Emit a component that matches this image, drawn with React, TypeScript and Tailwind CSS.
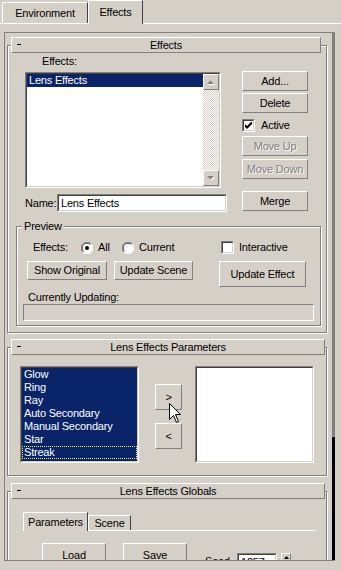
import React from 'react';

const FONT = "font-['Liberation_Sans',Arial,sans-serif] text-[11px] tracking-[-0.2px] leading-[13px]";
const RAISED = 'border border-t-white border-l-white border-r-[#808080] border-b-[#808080]';
const ETCHED = 'border border-[#808080] shadow-[inset_1px_1px_0_#fff,1px_1px_0_#fff]';
const DISABLED = 'text-[#808080] [text-shadow:1px_1px_0_#fff]';

function Btn({ children, className = '', disabled = false }: { children?: React.ReactNode; className?: string; disabled?: boolean }) {
  return (
    <div className={`${RAISED} flex items-center justify-center ${disabled ? DISABLED : ''} ${className}`}>
      {children}
    </div>
  );
}

function Sunken({ children, className = '', inner = '' }: { children?: React.ReactNode; className?: string; inner?: string }) {
  return (
    <div className={`border border-t-[#808080] border-l-[#808080] border-b-white border-r-white ${className}`}>
      <div className={`h-full border border-t-[#404040] border-l-[#404040] border-b-[#d4d0c8] border-r-[#d4d0c8] ${inner}`}>
        {children}
      </div>
    </div>
  );
}

function CheckBox({ checked = false }: { checked?: boolean }) {
  return (
    <Sunken className="w-[13px] h-[13px] shrink-0" inner="bg-white flex items-center justify-center">
      {checked && (
        <svg width="7" height="7" viewBox="0 0 7 7">
          <path d="M0 2v3l2 2 5-5V-1L2 4z" fill="#000" />
        </svg>
      )}
    </Sunken>
  );
}

function Radio({ checked = false }: { checked?: boolean }) {
  return (
    <svg width="12" height="12" viewBox="0 0 12 12" className="shrink-0">
      <circle cx="6" cy="6" r="5.5" fill="#fff" />
      <path d="M10.2 1.8A5.5 5.5 0 0 0 1.8 10.2" fill="none" stroke="#808080" />
      <path d="M9.4 2.6A4.5 4.5 0 0 0 2.6 9.4" fill="none" stroke="#404040" />
      <path d="M1.8 10.2A5.5 5.5 0 0 0 10.2 1.8" fill="none" stroke="#fff" />
      {checked && <circle cx="6" cy="6" r="2" fill="#000" />}
    </svg>
  );
}

function Arrow({ up }: { up?: boolean }) {
  return (
    <svg width="8" height="5" viewBox="0 0 8 5">
      <path d={up ? 'M1 5h7L4.5 1.5z' : 'M1 1h7L4.5 4.5z'} fill="#fff" />
      <path d={up ? 'M0 4h7L3.5 0.5z' : 'M0 0h7L3.5 3.5z'} fill="#808080" />
    </svg>
  );
}

function Rollout({ title, headerW, frameH, className = '', children }: { title: string; headerW: string; frameH: string; className?: string; children?: React.ReactNode }) {
  return (
    <div className={`ml-[2px] w-[320px] shrink-0 ${className}`}>
      <div className={`relative z-10 ml-[4px] h-[16px] ${headerW} ${RAISED} bg-[#d4d0c8] flex items-center`}>
        <div className="absolute left-[5px] top-[6px] w-[4px] h-px bg-black" />
        <div className="flex-1 text-center">{title}</div>
      </div>
      <div className={`-mt-[8px] ${ETCHED} ${frameH}`}>{children}</div>
    </div>
  );
}

const lensItems = ['Glow', 'Ring', 'Ray', 'Auto Secondary', 'Manual Secondary', 'Star', 'Streak'];

export default function App() {
  return (
    <div className={`w-[341px] h-[570px] bg-[#d4d0c8] overflow-hidden text-black ${FONT}`}>
      {/* top tabs */}
      <div className="flex items-end h-[24px] border-b border-white pl-[2px]">
        <div className="h-[21px] w-[86px] border-t border-l border-r border-t-white border-l-white border-r-[#404040] rounded-tl-[2px] flex items-center justify-center">
          Environment
        </div>
        <div className="relative z-10 -mb-px h-[24px] w-[55px] border-t border-l border-r border-t-white border-l-white border-r-[#404040] rounded-tl-[2px] bg-[#d4d0c8] flex items-center justify-center">
          Effects
        </div>
      </div>

      {/* rollout panel */}
      <div className="mt-[8px] ml-[4px] w-[331px] h-[529px] border-t border-l border-b border-[#808080] flex">
        <div className="w-[327px] h-full overflow-hidden pt-[4px] flex flex-col">
          {/* Effects */}
          <Rollout title="Effects" headerW="w-[310px]" frameH="h-[288px]">
            <div className="flex pt-[9px]">
              <div className="ml-[17px] w-[196px] flex flex-col">
                <div className="ml-[17px] h-[13px]">Effects:</div>
                <Sunken className="mt-[4px] w-[196px] h-[116px]" inner="bg-white flex">
                  <div className="flex-1">
                    <div className="h-[13px] bg-[#0a246a] text-white pl-[2px]">Lens Effects</div>
                  </div>
                  <div className="w-[16px] flex flex-col">
                    <Btn className="h-[16px] bg-[#d4d0c8]"><Arrow up /></Btn>
                    <div className="flex-1 [background-image:repeating-conic-gradient(#d4d0c8_0%_25%,#ffffff_0%_50%)] [background-size:2px_2px]" />
                    <Btn className="h-[16px] bg-[#d4d0c8]"><Arrow /></Btn>
                  </div>
                </Sunken>
                <div className="mt-[6px] flex items-center h-[18px]">
                  <div className="w-[32px] shrink-0">Name:</div>
                  <Sunken className="w-[170px] h-[18px] shrink-0" inner="bg-white flex items-center pl-[2px]">
                    Lens Effects
                  </Sunken>
                </div>
              </div>
              <div className="ml-[21px] mt-[16px] w-[66px] flex flex-col">
                <Btn className="h-[20px]">Add...</Btn>
                <Btn className="mt-[2px] h-[20px]">Delete</Btn>
                <div className="mt-[4px] h-[17px] flex items-center">
                  <CheckBox checked />
                  <div className="ml-[6px]">Active</div>
                </div>
                <Btn className="mt-[2px] h-[20px]" disabled>Move Up</Btn>
                <Btn className="mt-[3px] h-[20px]" disabled>Move Down</Btn>
                <Btn className="mt-[12px] h-[20px]">Merge</Btn>
              </div>
            </div>

            {/* Preview group */}
            <div className={`relative mt-[14px] ml-[8px] w-[305px] h-[100px] ${ETCHED}`}>
              <div className="absolute -top-[7px] left-[5px] bg-[#d4d0c8] px-[2px]">Preview</div>
              <div className="pt-[13px] flex items-center h-[28px]">
                <div className="ml-[16px] w-[48px]">Effects:</div>
                <Radio checked />
                <div className="ml-[5px] w-[24px]">All</div>
                <Radio />
                <div className="ml-[5px] w-[82px]">Current</div>
                <CheckBox />
                <div className="ml-[5px]">Interactive</div>
              </div>
              <div className="mt-[6px] flex items-start">
                <Btn className="ml-[10px] w-[80px] h-[19px]">Show Original</Btn>
                <Btn className="ml-[7px] w-[79px] h-[19px]">Update Scene</Btn>
                <Btn className="ml-[26px] w-[87px] h-[26px]">Update Effect</Btn>
              </div>
              <div className="mt-[4px] ml-[11px] h-[13px]">Currently Updating:</div>
              <div className="ml-[6px] w-[291px] h-[17px] border border-t-[#808080] border-l-[#808080] border-b-white border-r-white" />
            </div>
          </Rollout>

          {/* Lens Effects Parameters */}
          <Rollout title="Lens Effects Parameters" headerW="w-[314px]" frameH="h-[129px]" className="mt-[6px]">
            <div className="flex pt-[18px] pl-[12px]">
              <Sunken className="w-[119px] h-[97px]" inner="bg-[#0a246a] text-white">
                {lensItems.map((item) => (
                  <div
                    key={item}
                    className={`h-[13px] pl-[2px] whitespace-nowrap ${item === 'Streak' ? 'outline-1 outline-dotted outline-[#e8e8e8] -outline-offset-1' : ''}`}
                  >
                    {item}
                  </div>
                ))}
              </Sunken>
              <div className="relative ml-[16px] w-[27px] flex flex-col">
                <Btn className="mt-[18px] h-[26px]">&gt;</Btn>
                <Btn className="mt-[13px] h-[26px]">&lt;</Btn>
                <svg className="absolute left-[14px] top-[37px]" width="13" height="21" viewBox="0 0 13 21">
                  <path d="M0.5 0.5V16.5L4.5 12.5L7.5 19.5L9.5 18.5L6.5 11.5H11.5Z" fill="#fff" stroke="#000" strokeLinejoin="miter" />
                </svg>
              </div>
              <Sunken className="ml-[13px] w-[119px] h-[97px]" inner="bg-white" />
            </div>
          </Rollout>

          {/* Lens Effects Globals */}
          <Rollout title="Lens Effects Globals" headerW="w-[314px]" frameH="h-[140px]" className="mt-[7px]">
            <div className="pt-[20px] pl-[15px]">
              <div className="flex items-end h-[19px] w-[293px] border-b border-white">
                <div className="relative z-10 -mb-px h-[19px] w-[65px] border-t border-l border-r border-t-white border-l-white border-r-[#404040] rounded-tl-[2px] bg-[#d4d0c8] flex items-center justify-center">
                  Parameters
                </div>
                <div className="h-[15px] w-[43px] border-t border-l border-r border-t-white border-l-white border-r-[#404040] flex items-center justify-center">
                  Scene
                </div>
              </div>
              <div className="mt-[12px] flex items-start">
                <Btn className="ml-[19px] w-[64px] h-[24px]">Load</Btn>
                <Btn className="ml-[17px] w-[64px] h-[24px]">Save</Btn>
                <div className="ml-[18px] mt-[10px] flex items-start">
                  <div className="w-[32px] pt-[2px]">Seed</div>
                  <Sunken className="w-[40px] h-[18px]" inner="bg-white pl-[2px] flex items-center">
                    1257
                  </Sunken>
                  <Btn className="ml-[4px] w-[10px] h-[9px]">
                    <svg width="5" height="3" viewBox="0 0 5 3">
                      <path d="M0 3h5L2.5 0z" fill="#000" />
                    </svg>
                  </Btn>
                </div>
              </div>
            </div>
          </Rollout>
        </div>
        {/* thin panel scrollbar */}
        <div className="w-[3px] h-full flex flex-col">
          <div className="h-[404px] bg-[#808080]" />
          <div className="flex-1 bg-black" />
        </div>
      </div>
    </div>
  );
}
